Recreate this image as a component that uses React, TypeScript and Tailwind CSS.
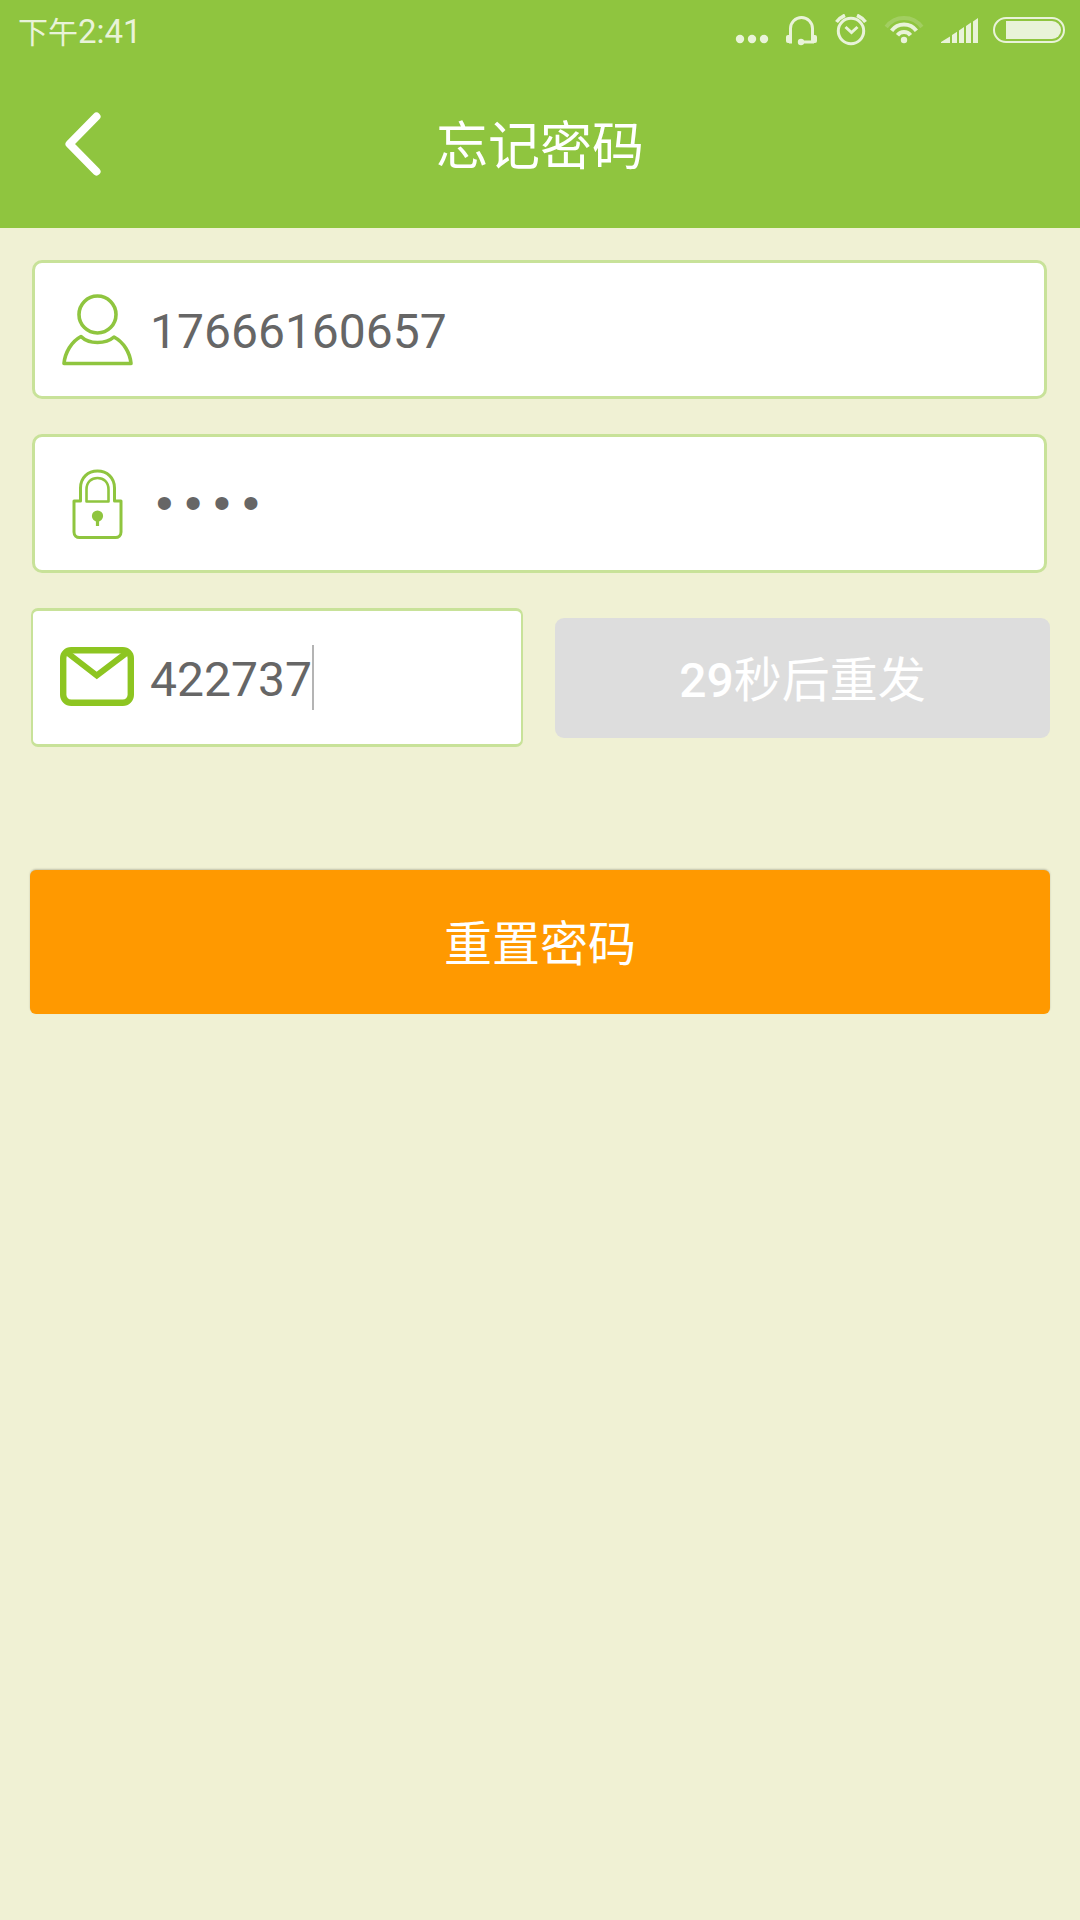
import { useState } from "react";
import type { ReactNode } from "react";

const GREEN = "#8fc53f";

function StatusIcons() {
  return (
    <svg
      width="330"
      height="32"
      viewBox="735 14 330 32"
      fill="none"
      stroke="#e9f3d9"
      aria-hidden="true"
      className="shrink-0"
    >
      <g fill="#e9f3d9" stroke="none">
        <circle cx="740" cy="39" r="4.2" />
        <circle cx="752" cy="39" r="4.2" />
        <circle cx="764" cy="39" r="4.2" />
      </g>
      {/* headset */}
      <path d="M790.5 43.5V28.5a11 11 0 0 1 22 0v15M801 42h13" strokeWidth="3" />
      <g fill="#e9f3d9" stroke="none">
        <rect x="786" y="35" width="6" height="8" rx="2" />
        <rect x="811" y="35" width="6" height="8" rx="2" />
        <circle cx="801" cy="42" r="3.2" />
      </g>
      {/* alarm clock */}
      <circle cx="851" cy="31" r="12.7" strokeWidth="3" />
      <path d="M845.500 27l6 5.500 6-5.500" strokeWidth="3" />
      <path d="M836.500 22a21 21 0 0 1 8.500-6.700M857 15.300a21 21 0 0 1 8.500 6.700" strokeWidth="3.600" />
      {/* wifi */}
      <circle cx="904" cy="40" r="3.2" fill="#e9f3d9" stroke="none" />
      <path d="M897.500 35.200a8.200 8.200 0 0 1 13 0M891.600 30.800a15.500 15.500 0 0 1 24.800 0" strokeWidth="4" />
      <path d="M886.200 27a22 22 0 0 1 35.600 0" strokeWidth="4" opacity="0.22" />
      {/* signal */}
      <g fill="#e9f3d9" stroke="none">
        <path d="M941 43v-1l9-5.500V43zM952 43v-8l5-3.200V43zM959 43V30.500l5-3.500V43zM966 43V26l5-3.500V43zM973 43V21.500l5-3.500V43z" />
      </g>
      {/* battery */}
      <rect x="994" y="18" width="70" height="24" rx="12" strokeWidth="2" />
      <path d="M1006 21h46a9 9 0 0 1 0 18h-46z" fill="#e9f3d9" stroke="none" />
    </svg>
  );
}

function UserIcon() {
  return (
    <svg width="72" height="72" viewBox="62 293 72 72" fill="none" stroke={GREEN} strokeWidth="3.6" strokeLinejoin="round">
      <circle cx="97.500" cy="313.500" r="18.500" />
      <path d="M64 362.500c1-11 7.500-22 17-27 4 4 9.500 6 16.500 6s12.500-2 16.500-5.500c9.500 5 16 15.500 17 26.500z" />
    </svg>
  );
}

function LockIcon() {
  return (
    <svg width="72" height="72" viewBox="62 467 72 72" fill="none" stroke={GREEN} strokeLinejoin="round">
      <path
        d="M74 500h6.500v-13c0-10.500 7.500-17 17-17s17 6.500 17 17v13h6.500v31c0 3.500-2.500 5.500-5.500 5.500h-36c-3 0-5.500-2-5.500-5.500z"
        strokeWidth="3"
      />
      <path d="M86.500 500.500V488.500c0-7.500 5-11.500 11-11.500s11 4 11 11.500v12z" strokeWidth="2.600" />
      <circle cx="97.500" cy="515" r="5.600" fill={GREEN} stroke="none" />
      <path d="M97.500 518v7" strokeWidth="3.200" />
    </svg>
  );
}

function MailIcon() {
  return (
    <svg width="74" height="62" viewBox="60 647 74 62" fill="none" stroke="#8dc521" strokeWidth="6.400">
      <rect x="63.200" y="650.200" width="67.600" height="52.600" rx="8" />
      <path d="M67 652.500L96.800 675.500 127 652.500" strokeWidth="6" />
    </svg>
  );
}

type FieldProps = {
  label: string;
  icon: ReactNode;
  type?: string;
  value: string;
  onChange: (value: string) => void;
  caret?: boolean;
  className: string;
  inputClassName: string;
};

function Field({ label, icon, type = "text", value, onChange, caret, className, inputClassName }: FieldProps) {
  return (
    <label className={`relative flex h-[139px] items-center border-[#c8e299] bg-white ${className}`}>
      <span className="flex w-[74px] shrink-0 justify-center">{icon}</span>
      <input
        aria-label={label}
        type={type}
        value={value}
        onChange={(e) => onChange(e.target.value)}
        className={`h-[68px] min-w-0 flex-1 bg-transparent pt-1 text-[48px] leading-[64px] text-[#666666] outline-none ${inputClassName}`}
      />
      {caret && <span className="absolute left-[279px] top-[34px] h-[65px] w-0.5 bg-[#b4b4b4]" />}
    </label>
  );
}

export default function App() {
  const [phone, setPhone] = useState("17666160657");
  const [password, setPassword] = useState("1234");
  const [code, setCode] = useState("422737");

  return (
    <div className="min-h-screen bg-[#f0f1d4] font-['Roboto','Noto_Sans_CJK_SC',sans-serif]">
      <header className="bg-[#8fc53f]">
        <div className="flex h-[60px] items-center justify-between pl-[18px] pr-[15px]">
          <span className="flex items-baseline pt-1 text-[#e9f3d9]">
            <span className="text-[30px] leading-[40px]">下午</span>
            <span className="text-[33px] leading-[40px]">2:41</span>
          </span>
          <StatusIcons />
        </div>
        <div className="flex h-[168px] items-center px-[30px]">
          <button type="button" aria-label="返回" className="flex h-[120px] w-[120px] items-center pl-[34px]">
            <svg width="38" height="64" viewBox="64 112 38 64" fill="none" stroke="#fff" strokeWidth="8" strokeLinecap="round" strokeLinejoin="round">
              <path d="M96.500 116.500L69.500 144l27 27.500" />
            </svg>
          </button>
          <h1 className="flex-1 pt-2 text-center text-[52px] leading-[64px] text-white">忘记密码</h1>
          <span className="w-[120px]" />
        </div>
      </header>

      <main className="px-[30px] pt-8">
        <form onSubmit={(e) => e.preventDefault()} className="flex flex-col">
          <div className="flex flex-col gap-[35px]">
            <Field
              label="手机号"
              icon={<UserIcon />}
              value={phone}
              onChange={setPhone}
              className="ml-0.5 mr-[3px] rounded-[10px] border-[3px] pl-[26px]"
              inputClassName="pl-[15px] font-['Roboto',sans-serif]"
            />
            <Field
              label="新密码"
              icon={<LockIcon />}
              type="password"
              value={password}
              onChange={setPassword}
              className="ml-0.5 mr-[3px] rounded-[10px] border-[3px] pl-[26px]"
              inputClassName="pl-[15px] font-['Liberation_Mono',monospace]"
            />
            <div className="grid grid-cols-2 items-center gap-x-[30px]">
              <Field
                label="验证码"
                icon={<MailIcon />}
                value={code}
                onChange={setCode}
                caret
                className="ml-px mr-0.5 rounded-[7px] border-x-2 border-y-[3px] pl-[27px]"
                inputClassName="pl-4 font-['Roboto',sans-serif]"
              />
              <button
                type="button"
                disabled
                className="h-[120px] rounded-[9px] bg-[#dddddd] pt-1.5 text-[48px] leading-[64px] text-white"
              >
                <span className="font-medium">29</span>秒后重发
              </button>
            </div>
          </div>
          <button
            type="submit"
            className="mt-[123px] h-36 rounded-[6px] bg-[#ff9900] pt-1.5 text-[48px] leading-[64px] text-white shadow-[0_-1px_2px_rgba(0,0,0,0.2)]"
          >
            重置密码
          </button>
        </form>
      </main>
    </div>
  );
}
